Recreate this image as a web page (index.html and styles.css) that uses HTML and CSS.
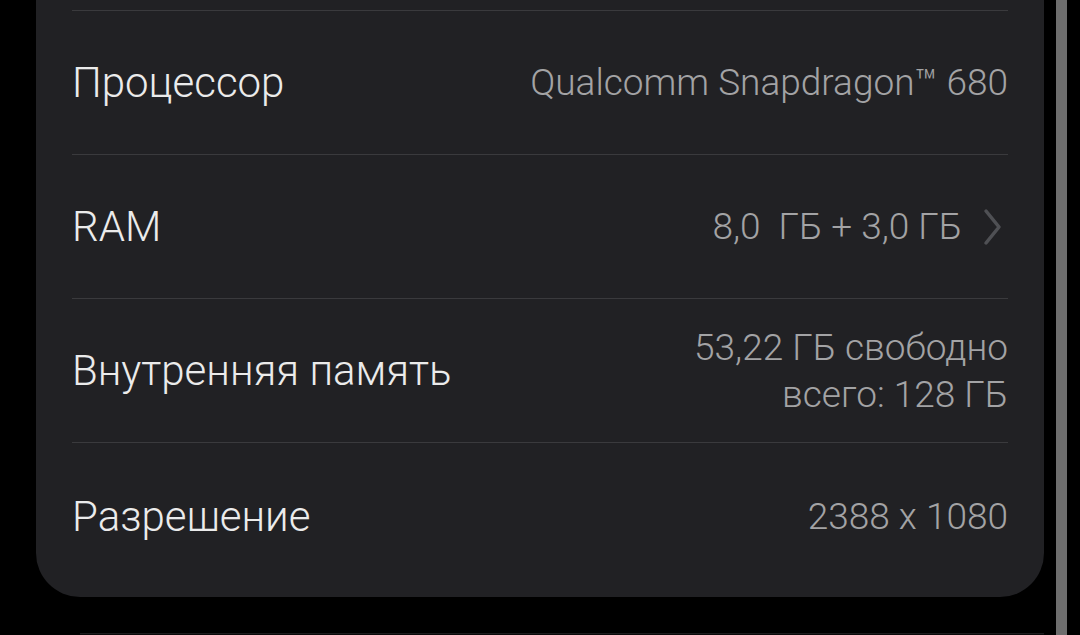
FILE: index.html
```html
<!DOCTYPE html>
<html lang="ru">
<head>
<meta charset="utf-8">
<link rel="stylesheet" href="styles.css">
</head>
<body>
<div class="page">
  <div class="content">
    <div class="card">
      <div class="top-gap"></div>
      <div class="row">
        <div class="label">Процессор</div>
        <div class="value">Qualcomm Snapdragon™ 680</div>
      </div>
      <div class="row">
        <div class="label">RAM</div>
        <div class="value with-chevron">8,0&nbsp; ГБ + 3,0 ГБ
          <svg class="chevron" width="20" height="40" viewBox="0 0 20 40"><path d="M4 4 L17 20 L4 36" fill="none" stroke="#4f5054" stroke-width="3.5" stroke-linecap="round" stroke-linejoin="round"/></svg>
        </div>
      </div>
      <div class="row">
        <div class="label">Внутренняя память</div>
        <div class="value multi"><span>53,22 ГБ свободно</span><span>всего: 128 ГБ</span></div>
      </div>
      <div class="row last">
        <div class="label">Разрешение</div>
        <div class="value">2388 x 1080</div>
      </div>
    </div>
    <div class="next-card"></div>
  </div>
  <div class="scrollbar"></div>
</div>
</body>
</html>
```
FILE: styles.css
```css
html, body {
  margin: 0;
  padding: 0;
  background: #000;
  height: 100%;
  overflow: hidden;
}
.page {
  display: flex;
  height: 635px;
  width: 1080px;
  overflow: hidden;
}
.content {
  width: 1008px;
  margin-left: 36px;
  display: flex;
  flex-direction: column;
}
.card {
  background: #212124;
  border-radius: 0 0 44px 44px;
  padding: 0 36px;
  height: 597px;
  flex: none;
  box-sizing: border-box;
  display: flex;
  flex-direction: column;
  font-family: Roboto, "Noto Sans", sans-serif;
}
.top-gap {
  height: 10px;
  flex: none;
}
.row {
  height: 144px;
  box-sizing: border-box;
  border-top: 1px solid #3a3a3d;
  display: flex;
  align-items: center;
  justify-content: space-between;
  flex: none;
}
.row.last {
  height: 155px;
  padding-bottom: 8px;
}
.label {
  color: #ebebeb;
  font-size: 42px;
  font-weight: 300;
}
.value {
  color: #a3a3a5;
  font-size: 37px;
  font-weight: 300;
  text-align: right;
}
.with-chevron {
  display: flex;
  align-items: center;
  gap: 20px;
}
.chevron {
  margin-right: 6px;
}
.multi {
  display: flex;
  flex-direction: column;
  align-items: flex-end;
  line-height: 47px;
}
.next-card {
  margin-top: 36px;
  margin-left: 44px;
  height: 2px;
  flex: none;
  border-top: 1px solid #1c1c1e;
  background: #0a0a0a;
}
.scrollbar {
  width: 11px;
  margin-left: 12px;
  background: #6e6e6e;
  height: 635px;
}
```
